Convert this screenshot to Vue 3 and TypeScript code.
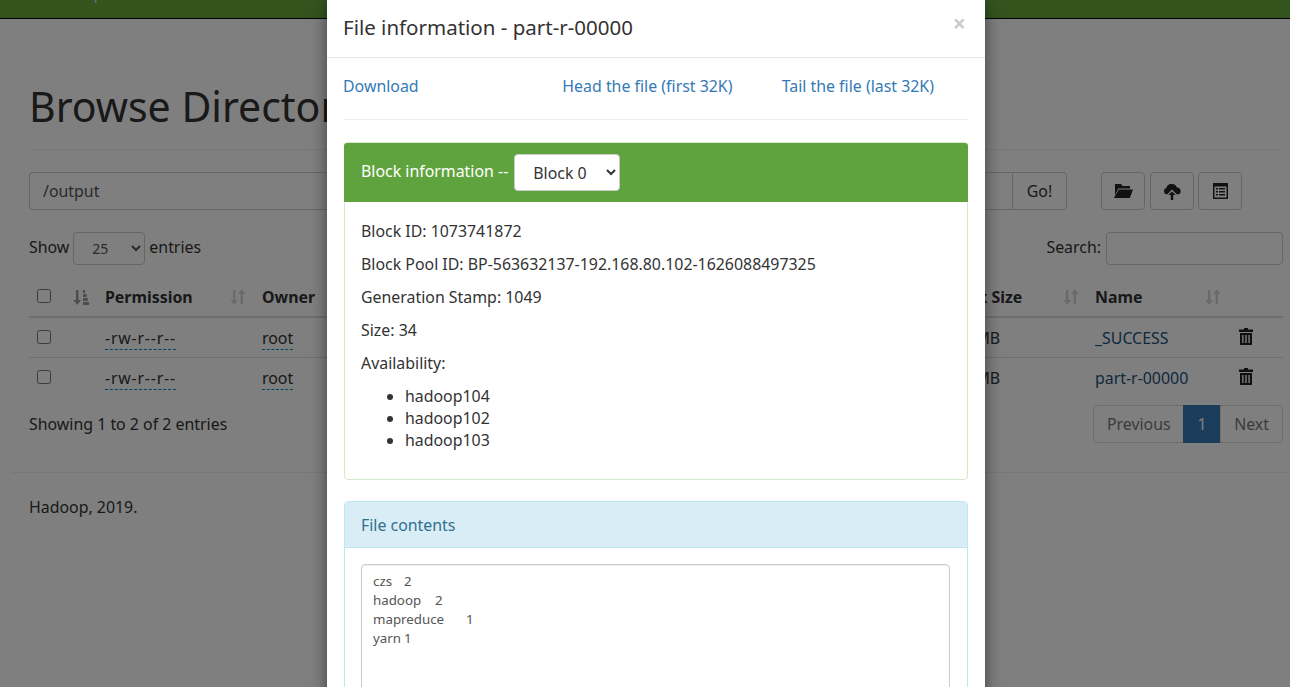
<script setup lang="ts">
import { ref } from 'vue'

interface Row { name: string }
const rows: Row[] = [{ name: '_SUCCESS' }, { name: 'part-r-00000' }]
const fileText = ref('czs\t2\nhadoop\t2\nmapreduce\t1\nyarn\t1\n')
const hosts = ['hadoop104', 'hadoop102', 'hadoop103']
</script>

<template>
  <div class="root">
    <nav class="navbar"><span class="brand">Hadoop</span></nav>

    <main class="page">
      <h1 class="title">Browse Directory</h1>

      <div class="toolbar">
        <div class="path-group">
          <input class="path-input" value="/output" />
          <button class="btn go">Go!</button>
        </div>
        <div class="tools">
          <button class="btn tool">
            <svg width="20" height="16" viewBox="0 0 20 16"><path d="M2 1h6l1.5 2H17v2.4H5.2L2 12.5z" /><path d="M5.8 6.6H20L16.8 15H.9z" /></svg>
          </button>
          <button class="btn tool">
            <svg width="18" height="17" viewBox="0 0 18 17"><path d="M9 1a5 5 0 0 1 4.7 3.2A3.9 3.9 0 0 1 16 11.3h-2.3L9 6.6l-4.7 4.7H3.2A3.3 3.3 0 0 1 3.3 5 5.4 5.4 0 0 1 9 1z" /><path d="M9 8.4l3.7 3.7h-2.5V17H7.8v-4.9H5.3z" /></svg>
          </button>
          <button class="btn tool">
            <svg width="15" height="16" viewBox="0 0 15 16"><path fill-rule="evenodd" d="M0 0h15v16H0zM1.5 3.5v11h12v-11z" /><path d="M3 5h2v1.6H3zM6 5h6v1.6H6zM3 8h2v1.6H3zM6 8h6v1.6H6zM3 11h2v1.6H3zM6 11h6v1.6H6z" /></svg>
          </button>
        </div>
      </div>

      <div class="controls">
        <label class="show"><span>Show</span>
          <select class="entries"><option>25</option></select>
          <span>entries</span></label>
        <label class="search"><span>Search:</span> <input class="search-input" /></label>
      </div>

      <table class="files">
        <colgroup>
          <col class="c-check" /><col class="c-sort" /><col class="c-perm" /><col class="c-owner" />
          <col class="c-hidden" /><col class="c-block" /><col class="c-name" /><col class="c-del" />
        </colgroup>
        <thead>
          <tr>
            <th class="cb"><input type="checkbox" /></th>
            <th class="sorted">
              <svg width="16" height="15" viewBox="0 0 16 15"><path d="M3 0h2.4v10H8l-3.8 5L.4 10H3z" /><path d="M10 0h2v3h-2zM10 4h3.5v3H10zM10 8h4.8v3H10zM10 12h6v3h-6z" /></svg>
            </th>
            <th>
              <div class="head"><span>Permission</span>
                <svg class="sort" width="16" height="16" viewBox="0 0 16 16"><path d="M3 1h2.4v10H8l-3.8 5L.4 11H3z" /><path d="M10.6 15H13V5h2.6l-3.8-5L8 5h2.6z" /></svg>
              </div>
            </th>
            <th><div class="head"><span>Owner</span></div></th>
            <th></th>
            <th>
              <div class="head"><span>Block Size</span>
                <svg class="sort" width="16" height="16" viewBox="0 0 16 16"><path d="M3 1h2.4v10H8l-3.8 5L.4 11H3z" /><path d="M10.6 15H13V5h2.6l-3.8-5L8 5h2.6z" /></svg>
              </div>
            </th>
            <th>
              <div class="head"><span>Name</span>
                <svg class="sort" width="16" height="16" viewBox="0 0 16 16"><path d="M3 1h2.4v10H8l-3.8 5L.4 11H3z" /><path d="M10.6 15H13V5h2.6l-3.8-5L8 5h2.6z" /></svg>
              </div>
            </th>
            <th></th>
          </tr>
        </thead>
        <tbody>
          <tr v-for="r in rows" :key="r.name">
            <td class="cb"><input type="checkbox" /></td>
            <td></td>
            <td><span class="editable perm">-rw-r--r--</span></td>
            <td><span class="editable">root</span></td>
            <td></td>
            <td>128 MB</td>
            <td><a class="link">{{ r.name }}</a></td>
            <td class="del">
              <svg width="14" height="17" viewBox="0 0 14 17"><path fill-rule="evenodd" d="M5 0h4v1.5h5v2.5H0V1.5h5zM1 5h12v12H1zM3.2 7v8h1.4V7zM6.3 7v8h1.4V7zM9.4 7v8h1.4V7z" /></svg>
            </td>
          </tr>
        </tbody>
      </table>

      <div class="table-foot">
        <span>Showing 1 to 2 of 2 entries</span>
        <div class="pager">
          <a class="pg">Previous</a><a class="pg active">1</a><a class="pg">Next</a>
        </div>
      </div>
    </main>

    <footer class="footer"><p>Hadoop, 2019.</p></footer>

    <div class="backdrop"></div>

    <section class="modal">
      <header class="modal-head">
        <h4>File information - part-r-00000</h4>
        <span class="close">×</span>
      </header>
      <div class="modal-body">
        <div class="links">
          <a>Download</a><a>Head the file (first 32K)</a><a>Tail the file (last 32K)</a>
        </div>
        <hr class="rule" />
        <div class="panel success">
          <div class="panel-head">
            <span class="head-label">Block information --</span>
            <select class="block-select"><option>Block 0</option></select>
          </div>
          <div class="panel-body">
            <p>Block ID: 1073741872</p>
            <p>Block Pool ID: BP-563632137-192.168.80.102-1626088497325</p>
            <p>Generation Stamp: 1049</p>
            <p>Size: 34</p>
            <p>Availability:</p>
            <ul><li v-for="h in hosts" :key="h">{{ h }}</li></ul>
          </div>
        </div>
        <div class="panel info">
          <div class="panel-head">File contents</div>
          <div class="panel-body">
            <textarea class="contents" readonly :value="fileText"></textarea>
          </div>
        </div>
      </div>
    </section>
  </div>
</template>

<style>
html, body { margin: 0; height: 100%; overflow: hidden; background: #fff; }
</style>

<style scoped>
.root {
  position: relative;
  height: 687px;
  overflow: hidden;
  font-family: "Noto Sans", "Liberation Sans", sans-serif;
  font-size: 15.9px;
  line-height: 22px;
  color: #333;
}
.navbar {
  height: 18px;
  background: #66a83a;
  border-bottom: 1px solid #000;
  overflow: hidden;
  position: relative;
  color: #ddd;
}
.brand { display: block; font-size: 18px; line-height: 22px; margin: -19px 0 0 37px; }
.page { padding: 0 7px 0 29px; }
.title {
  margin: 65px 0 22px;
  padding-bottom: 21px;
  border-bottom: 1px solid #eee;
  font-size: 41px;
  line-height: 44px;
  font-weight: 400;
}
.toolbar { display: flex; align-items: stretch; height: 38px; }
.path-group { display: flex; width: 1038px; }
.path-input {
  flex: 1;
  min-width: 0;
  box-sizing: border-box;
  padding: 0 13px;
  border: 1px solid #ccc;
  border-right: 0;
  border-radius: 4px 0 0 4px;
  font: inherit;
  color: #555;
  background: #fff;
}
.btn {
  box-sizing: border-box;
  border: 1px solid #ccc;
  background: #fff;
  border-radius: 4px;
  font: inherit;
  color: #333;
  padding: 0;
  display: flex;
  align-items: center;
  justify-content: center;
}
.go { width: 55px; border-radius: 0 4px 4px 0; }
.tools { display: flex; gap: 5px; margin-left: 34px; }
.tool { width: 44px; }
.tool:last-child { margin-left: -1px; }
.tool svg { fill: #222; }
.controls {
  display: flex;
  justify-content: space-between;
  align-items: center;
  margin-top: 22px;
  height: 33px;
}
.show, .search { display: flex; align-items: center; gap: 4px; }
.search { gap: 5px; }
.show span, .search span { margin-bottom: 3px; }
.entries {
  width: 72px;
  height: 33px;
  padding: 0 14px;
  margin: 0;
  border: 1px solid #ccc;
  border-radius: 4px;
  background: #fff;
  font: inherit;
  font-size: 14px;
  color: #555;
}
.search-input {
  width: 177px;
  height: 33px;
  box-sizing: border-box;
  border: 1px solid #ccc;
  border-radius: 4px;
  background: #fff;
}
.files {
  width: 1254px;
  margin-top: 13px;
  border-collapse: collapse;
  table-layout: fixed;
}
.c-check { width: 36px; }
.c-sort { width: 32px; }
.c-perm { width: 157px; }
.c-owner { width: 100px; }
.c-hidden { width: 582px; }
.c-block { width: 151px; }
.c-name { width: 142px; }
.c-del { width: 54px; }
.files th {
  height: 39px;
  padding: 0 8px;
  box-sizing: border-box;
  border-bottom: 2px solid #ddd;
  text-align: left;
  font-weight: 700;
}
.files td {
  height: 40px;
  padding: 2px 8px 0;
  border-bottom: 1px solid #ddd;
  box-sizing: border-box;
  white-space: nowrap;
}
.files tbody tr:last-child td { border-bottom: 0; }
.files input[type="checkbox"] { margin: 0; width: 14px; height: 14px; display: block; }
.cb { padding-bottom: 3px !important; }
.sorted svg { fill: #333; opacity: .5; display: block; }
.head { display: flex; justify-content: space-between; align-items: center; white-space: nowrap; }
.sort { fill: #333; opacity: .2; flex: none; }
.editable { border-bottom: 1px dashed #08c; }
.perm { letter-spacing: .8px; }
.link { color: #23527c; }
.del svg { fill: #222; display: block; margin: -4px 0 0 2px; }
.table-foot {
  display: flex;
  justify-content: space-between;
  align-items: center;
  margin-top: 8px;
  height: 38px;
}
.pager { display: flex; }
.pg {
  box-sizing: border-box;
  height: 38px;
  line-height: 36px;
  padding: 0 12.5px;
  border: 1px solid #ddd;
  margin-left: -1px;
  color: #777;
  background: #fff;
}
.pg:first-child { border-radius: 4px 0 0 4px; }
.pg:last-child { border-radius: 0 4px 4px 0; padding: 0 13px; }
.pg.active { background: #337ab7; border-color: #337ab7; color: #fff; width: 38px; padding: 0; text-align: center; }
.footer {
  margin: 29px 0 0 12px;
  border-top: 1px solid #eee;
  padding: 23px 0 0 17px;
}
.footer p { margin: 0; }
.backdrop { position: absolute; inset: 0; background: rgba(0, 0, 0, .5); }
.modal {
  position: absolute;
  top: 0;
  left: 327px;
  width: 658px;
  height: 900px;
  background: #fff;
  box-shadow: 0 5px 15px rgba(0, 0, 0, .5);
}
.modal-head {
  display: flex;
  justify-content: space-between;
  height: 57px;
  box-sizing: content-box;
  padding: 0 16px;
  border-bottom: 1px solid #e5e5e5;
}
.modal-head h4 { margin: 15px 0 0; font-size: 20.5px; line-height: 24px; font-weight: 400; }
.close { margin: 8px 3px 0 0; font-size: 23px; line-height: 30px; font-weight: 700; color: #000; opacity: .2; }
.modal-body { padding: 0 17px; }
.links { display: grid; grid-template-columns: repeat(3, 1fr); margin: 17px -17px 0; height: 22px; }
.links a { padding-left: 16px; color: #337ab7; }
.rule { margin: 22px 0; border: 0; border-top: 1px solid #eee; }
.panel { border: 1px solid; border-radius: 4px; box-sizing: border-box; width: 624px; margin-bottom: 21px; }
.panel-head { border-radius: 3px 3px 0 0; padding: 0 16px 0 17px; display: flex; align-items: center; gap: 6px; }
.head-label { margin-bottom: 3px; }
.panel-body { padding: 17px 17px 17px 16px; }
.success { border-color: #d6e9c6; }
.success .panel-head { height: 59px; background: #5fa33e; color: #fff; margin: 0 -1px; }
.success .panel-body { padding-top: 18px; }
.info { border-color: #bce8f1; }
.info .panel-head { height: 45px; background: #d9edf7; color: #31708f; border-bottom: 1px solid #bce8f1; padding-left: 16px; }
.info .panel-body { padding-top: 16px; }
.block-select {
  width: 106px;
  height: 37px;
  padding: 0 14px;
  border: 1px solid #ccc;
  border-radius: 4px;
  background: #fff;
  font: inherit;
  color: #333;
}
.panel-body p { margin: 0 0 11px; }
.panel-body ul { margin: 0 0 11px; padding-left: 44px; }
.contents {
  display: block;
  box-sizing: border-box;
  width: 100%;
  height: 260px;
  padding: 7px 11px;
  border: 1px solid #ccc;
  border-radius: 4px;
  box-shadow: inset 0 1px 1px rgba(0, 0, 0, .075);
  font-family: inherit;
  font-size: 13.3px;
  line-height: 19px;
  color: #555;
  tab-size: 31px;
  resize: none;
  overflow: hidden;
  outline: none;
}
</style>
